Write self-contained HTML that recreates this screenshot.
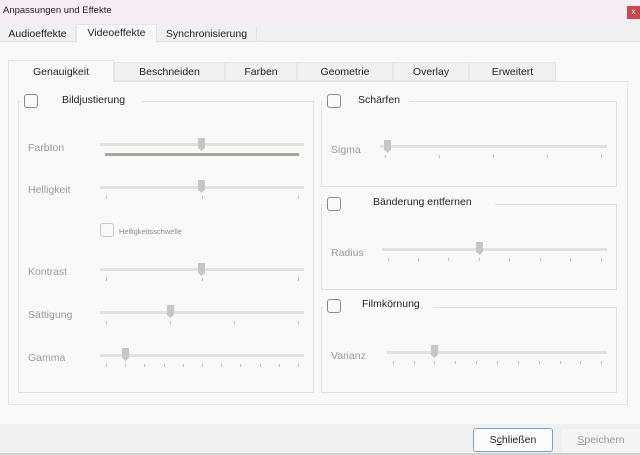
<!DOCTYPE html>
<html><head><meta charset="utf-8"><style>
*{margin:0;padding:0;box-sizing:border-box}
body{width:640px;height:455px;position:relative;overflow:hidden;background:#f9f9f9;font-family:"Liberation Sans",sans-serif;font-size:10.5px;color:#222}
.a{position:absolute}
.t{position:absolute;white-space:nowrap}
.lbl{position:absolute;color:#9a9a9a;font-size:10.5px}
.trk{position:absolute;height:3px;background:#e2e2e2}
.h{position:absolute;width:7px;height:13px;background:#c6c6c6;clip-path:polygon(0 0,100% 0,100% 75%,50% 100%,0 75%)}
.tk{position:absolute;width:1px;height:3px;background:#bdbdbd}
.cb{position:absolute;width:14px;height:14px;border:1px solid #8a8a8a;border-radius:3px;background:#f9f9f9}
.gb{position:absolute;border:1px solid #e0e0e0}
.tab{position:absolute;text-align:center;font-size:10.5px}
</style></head><body>
<div class="a" style="left:0;top:0;width:640px;height:23px;background:linear-gradient(#f5edf3,#f7eef5)"></div>
<div class="t" style="left:3px;top:5px;font-size:9.5px;color:#222">Anpassungen und Effekte</div>
<div class="a" style="left:627px;top:6px;width:13px;height:13px;background:#c9474e;color:#fff;font-size:8px;text-align:center;line-height:12px">x</div>
<div class="a" style="left:0;top:23px;width:640px;height:19px;background:#f0f0f0;border-bottom:1px solid #e2e2e2"></div>
<div class="tab" style="left:0;top:26px;width:76px;height:16px;border-right:1px solid #e4e4e4;line-height:16px">Audioeffekte</div>
<div class="tab" style="left:76px;top:24px;width:81px;height:19px;background:#f9f9f9;border:1px solid #e4e4e4;border-bottom:none;line-height:17px">Videoeffekte</div>
<div class="tab" style="left:157px;top:26px;width:100px;height:16px;border-right:1px solid #e4e4e4;line-height:16px">Synchronisierung</div>

<div class="a" style="left:8px;top:81px;width:620px;height:324px;border:1px solid #e3e3e3;background:#f9f9f9"></div>
<div class="tab" style="left:8px;top:60px;width:106px;height:22px;background:#f9f9f9;border:1px solid #e3e3e3;border-bottom:none;line-height:22px">Genauigkeit</div>
<div class="tab" style="left:114px;top:62px;width:111px;height:19px;background:#f0f0f0;border:1px solid #e6e6e6;line-height:19px">Beschneiden</div>
<div class="tab" style="left:225px;top:62px;width:72px;height:19px;background:#f0f0f0;border:1px solid #e6e6e6;line-height:19px">Farben</div>
<div class="tab" style="left:297px;top:62px;width:96px;height:19px;background:#f0f0f0;border:1px solid #e6e6e6;line-height:19px">Geometrie</div>
<div class="tab" style="left:393px;top:62px;width:76px;height:19px;background:#f0f0f0;border:1px solid #e6e6e6;line-height:19px">Overlay</div>
<div class="tab" style="left:469px;top:62px;width:87px;height:19px;background:#f0f0f0;border:1px solid #e6e6e6;line-height:19px">Erweitert</div>

<!-- left group -->
<div class="gb" style="left:18px;top:101px;width:296px;height:292px"></div>
<div class="a" style="left:20px;top:96px;width:122px;height:10px;background:#f9f9f9"></div>
<div class="cb" style="left:24px;top:94px"></div>
<div class="t" style="left:62px;top:94px">Bildjustierung</div>

<div class="lbl" style="left:28px;top:142px">Farbton</div>
<div class="trk" style="left:100px;top:143px;width:204px"></div>
<div class="h" style="left:198px;top:138px"></div>
<div class="a" style="left:105px;top:153px;width:194px;height:3px;background:#a9a898"></div>

<div class="lbl" style="left:28px;top:184px">Helligkeit</div>
<div class="trk" style="left:100px;top:186px;width:204px"></div>
<div class="h" style="left:198px;top:180px"></div>
<div class="tk" style="left:106px;top:196px"></div><div class="tk" style="left:202px;top:196px"></div><div class="tk" style="left:298px;top:196px"></div>

<div class="a" style="left:100px;top:223px;width:14px;height:14px;border:1px solid #c8c8c8;border-radius:3px"></div>
<div class="t" style="left:119px;top:227px;font-size:7.5px;color:#8a8a8a">Helligkeitsschwelle</div>

<div class="lbl" style="left:28px;top:266px">Kontrast</div>
<div class="trk" style="left:100px;top:268px;width:204px"></div>
<div class="h" style="left:198px;top:263px"></div>
<div class="tk" style="left:106px;top:278px"></div><div class="tk" style="left:202px;top:278px"></div><div class="tk" style="left:298px;top:278px"></div>

<div class="lbl" style="left:28px;top:309px">Sättigung</div>
<div class="trk" style="left:100px;top:311px;width:204px"></div>
<div class="h" style="left:167px;top:305px"></div>
<div class="tk" style="left:106px;top:321px"></div><div class="tk" style="left:170px;top:321px"></div><div class="tk" style="left:234px;top:321px"></div><div class="tk" style="left:298px;top:321px"></div>

<div class="lbl" style="left:28px;top:352px">Gamma</div>
<div class="trk" style="left:100px;top:354px;width:204px"></div>
<div class="h" style="left:122px;top:348px"></div>
<div class="tk" style="left:106px;top:364px"></div><div class="tk" style="left:125px;top:364px"></div><div class="tk" style="left:144px;top:364px"></div><div class="tk" style="left:164px;top:364px"></div><div class="tk" style="left:183px;top:364px"></div><div class="tk" style="left:202px;top:364px"></div><div class="tk" style="left:221px;top:364px"></div><div class="tk" style="left:240px;top:364px"></div><div class="tk" style="left:260px;top:364px"></div><div class="tk" style="left:279px;top:364px"></div><div class="tk" style="left:298px;top:364px"></div>

<!-- Schärfen -->
<div class="gb" style="left:321px;top:101px;width:296px;height:86px"></div>
<div class="a" style="left:323px;top:96px;width:86px;height:10px;background:#f9f9f9"></div>
<div class="cb" style="left:327px;top:94px"></div>
<div class="t" style="left:358px;top:94px">Schärfen</div>
<div class="lbl" style="left:331px;top:144px">Sigma</div>
<div class="trk" style="left:380px;top:145px;width:227px"></div>
<div class="h" style="left:384px;top:140px"></div>
<div class="tk" style="left:385px;top:155px"></div><div class="tk" style="left:439px;top:155px"></div><div class="tk" style="left:493px;top:155px"></div><div class="tk" style="left:547px;top:155px"></div><div class="tk" style="left:601px;top:155px"></div>

<!-- Bänderung -->
<div class="gb" style="left:321px;top:204px;width:296px;height:86px"></div>
<div class="a" style="left:323px;top:199px;width:172px;height:10px;background:#f9f9f9"></div>
<div class="cb" style="left:327px;top:197px"></div>
<div class="t" style="left:373px;top:196px">Bänderung entfernen</div>
<div class="lbl" style="left:331px;top:247px">Radius</div>
<div class="trk" style="left:382px;top:248px;width:225px"></div>
<div class="h" style="left:476px;top:242px"></div>
<div class="tk" style="left:388px;top:258px"></div><div class="tk" style="left:418px;top:258px"></div><div class="tk" style="left:448px;top:258px"></div><div class="tk" style="left:479px;top:258px"></div><div class="tk" style="left:509px;top:258px"></div><div class="tk" style="left:540px;top:258px"></div><div class="tk" style="left:570px;top:258px"></div><div class="tk" style="left:601px;top:258px"></div>

<!-- Filmkörnung -->
<div class="gb" style="left:321px;top:307px;width:296px;height:86px"></div>
<div class="a" style="left:323px;top:302px;width:110px;height:10px;background:#f9f9f9"></div>
<div class="cb" style="left:327px;top:299px"></div>
<div class="t" style="left:362px;top:298px">Filmkörnung</div>
<div class="lbl" style="left:331px;top:350px">Varianz</div>
<div class="trk" style="left:387px;top:351px;width:220px"></div>
<div class="h" style="left:431px;top:345px"></div>
<div class="tk" style="left:393px;top:361px"></div><div class="tk" style="left:414px;top:361px"></div><div class="tk" style="left:434px;top:361px"></div><div class="tk" style="left:455px;top:361px"></div><div class="tk" style="left:476px;top:361px"></div><div class="tk" style="left:497px;top:361px"></div><div class="tk" style="left:518px;top:361px"></div><div class="tk" style="left:539px;top:361px"></div><div class="tk" style="left:560px;top:361px"></div><div class="tk" style="left:580px;top:361px"></div><div class="tk" style="left:601px;top:361px"></div>

<!-- bottom -->
<div class="a" style="left:0;top:424px;width:640px;height:31px;background:#f0f0f0;border-bottom:2px solid #d0d0d0"></div>
<div class="a" style="left:473px;top:428px;width:80px;height:24px;border:1px solid #7ea3c2;border-radius:3px;background:#fcfcfc;text-align:center;line-height:22px;font-size:10.5px">S<u>c</u>hließen</div>
<div class="a" style="left:562px;top:429px;width:78px;height:23px;background:#f5f5f5;text-align:center;line-height:22px;font-size:10.5px;color:#999"><u>S</u>peichern</div>
</body></html>
